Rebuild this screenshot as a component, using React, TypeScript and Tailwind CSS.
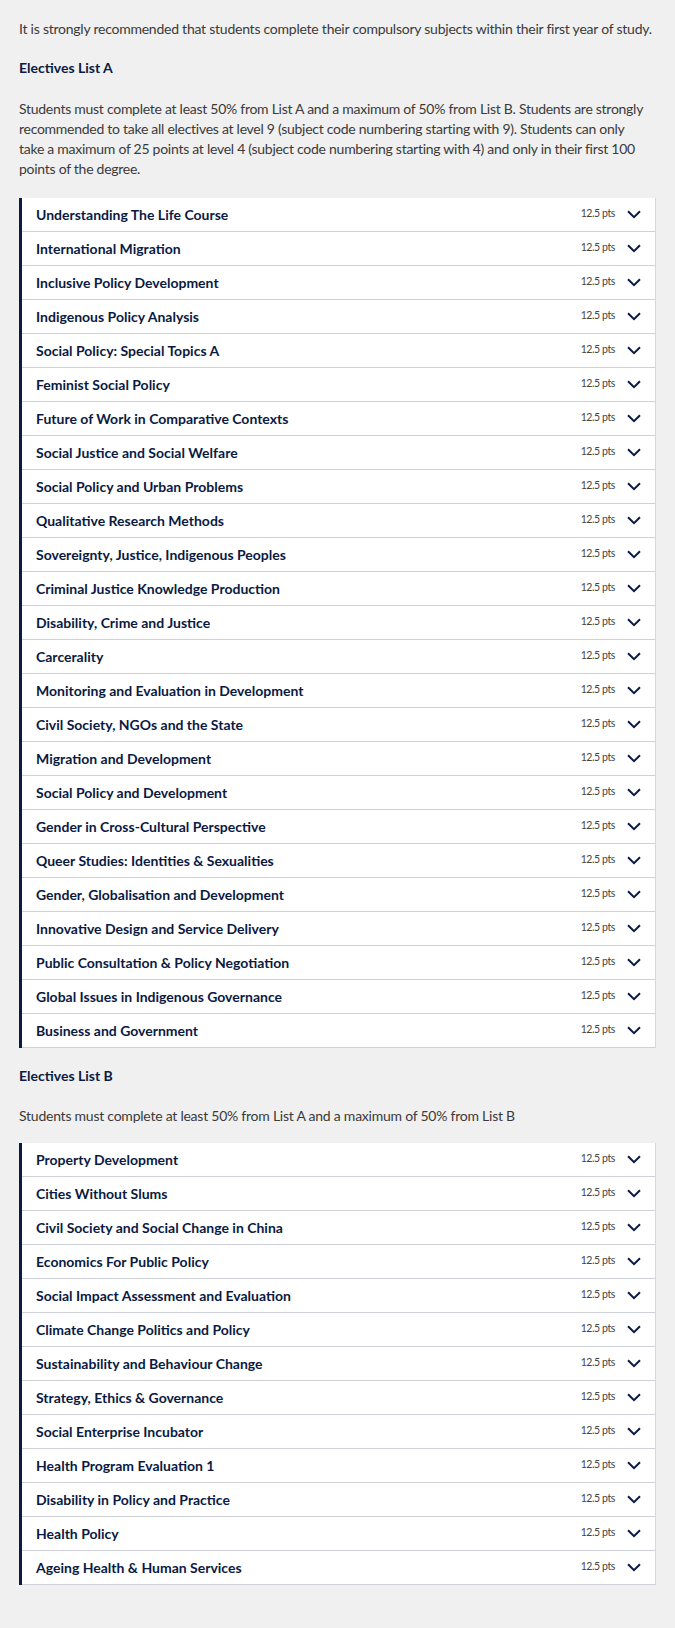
import React from "react";

const listA = [
  "Understanding The Life Course",
  "International Migration",
  "Inclusive Policy Development",
  "Indigenous Policy Analysis",
  "Social Policy: Special Topics A",
  "Feminist Social Policy",
  "Future of Work in Comparative Contexts",
  "Social Justice and Social Welfare",
  "Social Policy and Urban Problems",
  "Qualitative Research Methods",
  "Sovereignty, Justice, Indigenous Peoples",
  "Criminal Justice Knowledge Production",
  "Disability, Crime and Justice",
  "Carcerality",
  "Monitoring and Evaluation in Development",
  "Civil Society, NGOs and the State",
  "Migration and Development",
  "Social Policy and Development",
  "Gender in Cross-Cultural Perspective",
  "Queer Studies: Identities & Sexualities",
  "Gender, Globalisation and Development",
  "Innovative Design and Service Delivery",
  "Public Consultation & Policy Negotiation",
  "Global Issues in Indigenous Governance",
  "Business and Government",
];

const listB = [
  "Property Development",
  "Cities Without Slums",
  "Civil Society and Social Change in China",
  "Economics For Public Policy",
  "Social Impact Assessment and Evaluation",
  "Climate Change Politics and Policy",
  "Sustainability and Behaviour Change",
  "Strategy, Ethics & Governance",
  "Social Enterprise Incubator",
  "Health Program Evaluation 1",
  "Disability in Policy and Practice",
  "Health Policy",
  "Ageing Health & Human Services",
];

function Chevron() {
  return (
    <svg width="14" height="9" viewBox="0 0 14 9" fill="none">
      <path d="M1 1.2 L7 7.2 L13 1.2" stroke="#0a1a43" strokeWidth="2" />
    </svg>
  );
}

function SubjectList({ items }: { items: string[] }) {
  return (
    <div className="bg-white border-l-[3px] border-[#0a1a43] border-r border-r-[#d3d6db]">
      {items.map((name) => (
        <div
          key={name}
          className="flex items-center h-[34px] pl-[14px] pr-[14px] pb-[1px] border-b border-[#cfd3d9]"
        >
          <span className="flex-1 text-[14px] font-bold text-[#0a1a43]">{name}</span>
          <span className="text-[10.5px] text-[#444] mr-[12px] tracking-[-0.4px]">12.5 pts</span>
          <Chevron />
        </div>
      ))}
    </div>
  );
}

export default function App() {
  return (
    <div
      className="min-h-[1628px] bg-[#f0f0f0] px-[19px] pt-[19px] pb-[42px] text-[#3a3a3a]"
      style={{ fontFamily: "'Source Sans Pro', Lato, sans-serif" }}
    >
      <p className="text-[14px] leading-[20px] tracking-[-0.24px]">
        It is strongly recommended that students complete their compulsory subjects within their first year of study.
      </p>
      <h3 className="mt-[19px] text-[14px] leading-[20px] font-bold text-[#0a1a43]">
        Electives List A
      </h3>
      <p className="mt-[21px] text-[14px] leading-[20px] tracking-[-0.27px] pr-[10px]">
        Students must complete at least 50% from List A and a maximum of 50% from List B. Students are strongly
        recommended to take all electives at level 9 (subject code numbering starting with 9). Students can only
        take a maximum of 25 points at level 4 (subject code numbering starting with 4) and only in their first 100
        points of the degree.
      </p>
      <div className="mt-[19px]">
        <SubjectList items={listA} />
      </div>
      <h3 className="mt-[18px] text-[14px] leading-[20px] font-bold text-[#0a1a43]">
        Electives List B
      </h3>
      <p className="mt-[20px] text-[14px] leading-[20px] tracking-[-0.24px]">
        Students must complete at least 50% from List A and a maximum of 50% from List B
      </p>
      <div className="mt-[17px]">
        <SubjectList items={listB} />
      </div>
    </div>
  );
}
